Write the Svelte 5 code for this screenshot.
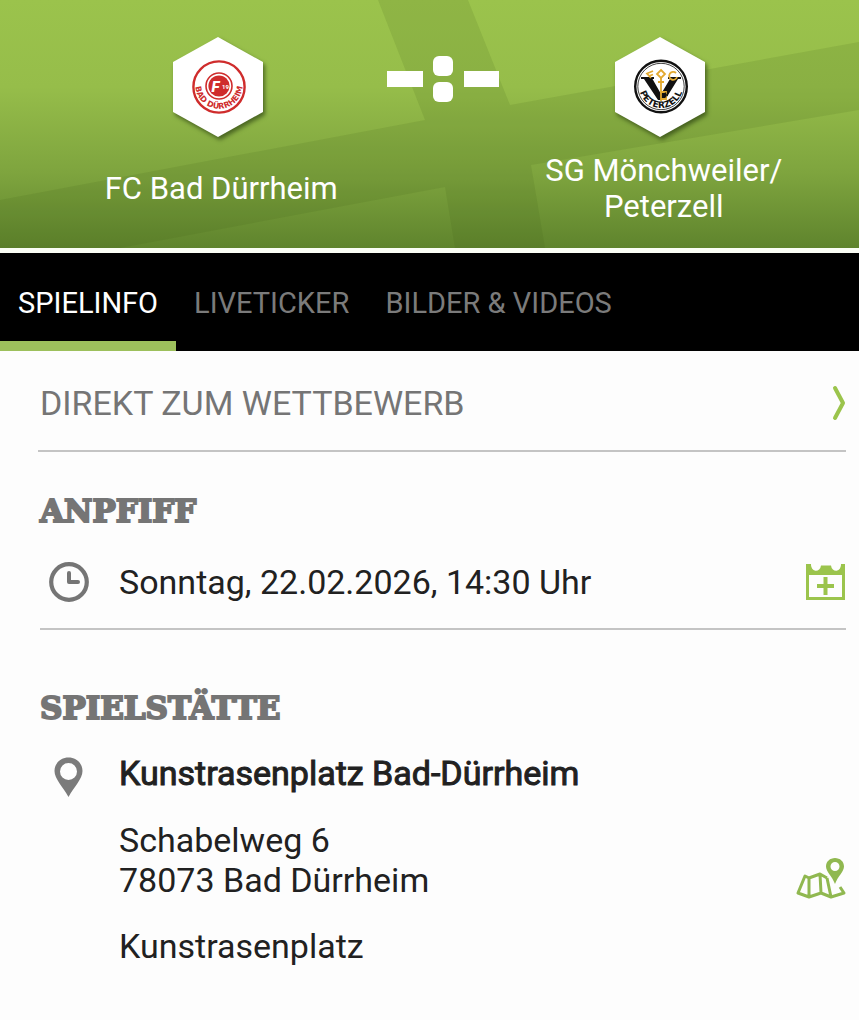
<script>
    let active = "spielinfo";

    const tabs = [
        { id: "spielinfo", label: "SPIELINFO" },
        { id: "liveticker", label: "LIVETICKER" },
        { id: "bilder", label: "BILDER & VIDEOS" },
    ];
</script>

<main>
    <header>
        <svg class="pattern" viewBox="0 0 859 248" preserveAspectRatio="none" aria-hidden="true">
            <path d="M378 0H468L510 105L859 42V110L531 165L545 248H455L445 187L120 248H0V200L425 120Z" />
        </svg>
        <div class="team">
            <svg class="crest" viewBox="0 0 90 100" role="img" aria-label="Wappen FC Bad Dürrheim">
                <path class="hex" d="M45 0L90 25V75L45 100L0 75V25Z" />
                <circle cx="46" cy="50" r="25.6" fill="#fff" stroke="#cf2c2c" stroke-width="2.4" />
                <circle cx="46" cy="49" r="13" fill="#fff" stroke="#cf2c2c" stroke-width="1.6" />
                <circle cx="46" cy="49" r="10.6" fill="#cf2c2c" />
                <text class="f" x="38.5" y="54.5">F</text>
                <text class="nr" x="49" y="51.5">19</text>
                <path id="arc-left" d="M22.5 46A23.6 23.6 0 1 0 69.5 46" fill="none" />
                <text class="ring red"><textPath href="#arc-left" startOffset="50%" text-anchor="middle">BAD DÜRRHEIM</textPath></text>
            </svg>
            <h2>FC Bad Dürrheim</h2>
        </div>
        <svg class="score" viewBox="0 0 112 46" role="img" aria-label="Noch kein Ergebnis">
            <rect x="0" y="15" width="36" height="16" />
            <rect x="46" y="0" width="20" height="20" rx="6" />
            <rect x="46" y="26" width="20" height="20" rx="6" />
            <rect x="77" y="15" width="35" height="16" />
        </svg>
        <div class="team">
            <svg class="crest" viewBox="0 0 90 100" role="img" aria-label="Wappen SG Mönchweiler/Peterzell">
                <path class="hex" d="M45 0L90 25V75L45 100L0 75V25Z" />
                <circle cx="46" cy="49.5" r="25.8" fill="#fff" stroke="#111" stroke-width="2.4" />
                <circle cx="46" cy="49.5" r="23.2" fill="none" stroke="#111" stroke-width="0.8" />
                <path d="M26 40H39V42H37.500L46 57L55 42H53V40H66V42H63L50 63H43L29 42H26Z" fill="#111" />
                <g fill="none" stroke="#e3a92f" stroke-width="1.8">
                    <path d="M46 33L50 37L46 41L42 37Z" />
                    <path d="M46 41V64M43 45H49M46 55H51V62H46" />
                    <path d="M38 34L32 36.500L36 41M34 39L38 37.500" />
                    <path d="M61 36A4 4 0 1 0 62 40" />
                </g>
                <path d="M48 58H53M50.500 55.500V60.500" stroke="#111" stroke-width="1.4" />
                <path id="arc-right" d="M24 49A22 22 0 0 0 68 49" fill="none" />
                <text class="ring"><textPath href="#arc-right" startOffset="50%" text-anchor="middle">PETERZELL</textPath></text>
            </svg>
            <h2>SG Mönchweiler/<br />Peterzell</h2>
        </div>
    </header>

    <nav>
        {#each tabs as tab}
            <button class:active={active == tab.id} on:click={() => (active = tab.id)}>{tab.label}</button>
        {/each}
    </nav>

    <div class="content">
        <a class="competition" href="#wettbewerb">
            <span>DIREKT ZUM WETTBEWERB</span>
            <svg width="14" height="36" viewBox="0 0 14 36" aria-hidden="true">
                <path d="M3 3L11 18L3 33" fill="none" stroke="#9bc44c" stroke-width="4" stroke-linecap="round" stroke-linejoin="round" />
            </svg>
        </a>

        <section class="kickoff">
            <h3>ANPFIFF</h3>
            <div class="row">
                <svg class="icon" viewBox="0 0 40 40" aria-hidden="true">
                    <circle cx="20" cy="20" r="17.8" fill="none" stroke="#757575" stroke-width="4.2" />
                    <path d="M20 11V20H29" fill="none" stroke="#757575" stroke-width="4" stroke-linecap="round" stroke-linejoin="round" />
                </svg>
                <p>Sonntag, 22.02.2026, 14:30 Uhr</p>
                <button class="action" aria-label="Zum Kalender hinzufügen">
                    <svg width="40" height="36" viewBox="0 0 40 36">
                        <path fill="#9bc44c" fill-rule="evenodd" d="M0 0H5A5 6 0 0 0 15 1.5H25A5 6 0 0 0 35 0H39V36H0ZM3 11V33H36V11Z" />
                        <path d="M19.500 13V31M11 22H28" stroke="#9bc44c" stroke-width="4" />
                    </svg>
                </button>
            </div>
        </section>

        <section class="venue">
            <h3>SPIELSTÄTTE</h3>
            <div class="row place">
                <svg class="icon" viewBox="0 0 40 40" aria-hidden="true">
                    <path fill="#7b7b7b" fill-rule="evenodd" d="M19.500 0.500C27.500 0.500 33.500 6.500 33.500 14C33.500 22 25 30 19.500 40C14 30 5.500 22 5.500 14C5.500 6.500 11.500 0.500 19.500 0.500ZM19.500 6A8.500 8.500 0 1 0 19.500 23A8.500 8.500 0 1 0 19.500 6Z" />
                </svg>
                <p class="name">Kunstrasenplatz Bad-Dürrheim</p>
            </div>
            <div class="row address">
                <p>Schabelweg 6<br />78073 Bad Dürrheim</p>
                <button class="action" aria-label="Auf der Karte anzeigen">
                    <svg width="50" height="42" viewBox="0 0 50 42" fill="none" stroke="#90b850">
                        <path d="M31 20L24 16L13 20L9 18L2 35L13 39L25 35L35 39L48 35L44 29M13 20V39M24 16L25 35M31 20L35 39" stroke-width="3" stroke-linejoin="round" />
                        <path fill="#90b850" fill-rule="evenodd" stroke="none" d="M39 0C44 0 48 3.500 48 8.500C48 13.500 42 18 39 26C36 18 30 13.500 30 8.500C30 3.500 34 0 39 0ZM39 4A4.500 4.500 0 1 0 39 13A4.500 4.500 0 1 0 39 4Z" />
                    </svg>
                </button>
            </div>
            <p class="surface">Kunstrasenplatz</p>
        </section>
    </div>
</main>

<style>
    :global(body) {
        margin: 0;
        background: #fdfdfd;
    }
    main {
        font-family: Roboto, "Liberation Sans", sans-serif;
        color: #212121;
    }
    h2, h3, p {
        margin: 0;
    }
    button {
        border: 0;
        padding: 0;
        background: none;
        font-family: inherit;
        cursor: pointer;
    }
    svg {
        display: block;
        flex: none;
    }

    header {
        position: relative;
        display: grid;
        grid-template-columns: 1fr 112px 1fr;
        padding: 37px 30px 23px 56px;
        background: linear-gradient(#9bc34c 0%, #96bd4a 35%, #7ea43e 70%, #5f842d 100%);
        border-bottom: 5px solid #fafdf5;
    }
    .pattern {
        position: absolute;
        top: 0;
        left: 0;
        width: 100%;
        height: 100%;
        fill: rgba(60, 95, 20, 0.13);
    }
    .team {
        position: relative;
        display: flex;
        flex-direction: column;
        align-items: center;
        gap: 16px;
    }
    .crest {
        width: 90px;
        height: 100px;
        margin-right: 7px;
        overflow: visible;
    }
    .hex {
        fill: #fff;
        filter: drop-shadow(2px 3px 2px rgba(30, 50, 10, 0.6));
    }
    .f {
        font: italic 900 15px Roboto, sans-serif;
        fill: #fff;
    }
    .nr {
        font: 700 6px Roboto, sans-serif;
        fill: #fff;
    }
    .ring {
        font: 700 9px "DejaVu Sans", sans-serif;
        fill: #111;
    }
    .red {
        font-size: 8px;
        fill: #cf2c2c;
    }
    .team h2 {
        display: flex;
        align-items: center;
        min-height: 72px;
        font-size: 31px;
        font-weight: 400;
        line-height: 36px;
        color: #fff;
        text-align: center;
    }
    .score {
        position: relative;
        width: 112px;
        height: 46px;
        margin-top: 19px;
        fill: #fff;
    }

    nav {
        display: flex;
        background: #000;
    }
    nav button {
        height: 98px;
        padding: 2px 18px 0;
        border-top: 10px solid transparent;
        border-bottom: 10px solid transparent;
        font-size: 29px;
        color: #7b7b7b;
    }
    nav button.active {
        color: #fff;
        border-bottom-color: #9dc05c;
    }

    .content {
        padding: 0 13px 56px 38px;
    }
    .competition {
        display: flex;
        align-items: center;
        justify-content: space-between;
        height: 95px;
        padding: 4px 0 0 2px;
        border-bottom: 2px solid #c4c4c4;
        font-size: 34px;
        color: #757575;
        text-decoration: none;
    }
    h3 {
        font-family: "DejaVu Serif", serif;
        font-size: 31px;
        font-weight: 700;
        line-height: 36px;
        color: #757575;
        -webkit-text-stroke: 2px #757575;
    }
    .row {
        display: flex;
        align-items: center;
    }
    .icon {
        width: 40px;
        height: 40px;
        margin: 0 30px 0 9px;
    }
    p {
        font-size: 34px;
        line-height: 40px;
    }
    .action {
        margin-left: auto;
    }
    .kickoff {
        padding: 41px 0 26px;
        margin-left: 2px;
        border-bottom: 2px solid #c4c4c4;
    }
    .kickoff .row {
        margin-top: 33px;
    }
    .venue {
        padding-top: 60px;
        margin-left: 2px;
    }
    .venue .place {
        align-items: flex-start;
        margin-top: 31px;
    }
    .name {
        line-height: 32px;
        -webkit-text-stroke: 1px #212121;
    }
    .venue .address {
        align-items: flex-end;
        margin-top: 23px;
        padding-left: 79px;
    }
    .surface {
        margin-top: 26px;
        padding-left: 79px;
    }
</style>
